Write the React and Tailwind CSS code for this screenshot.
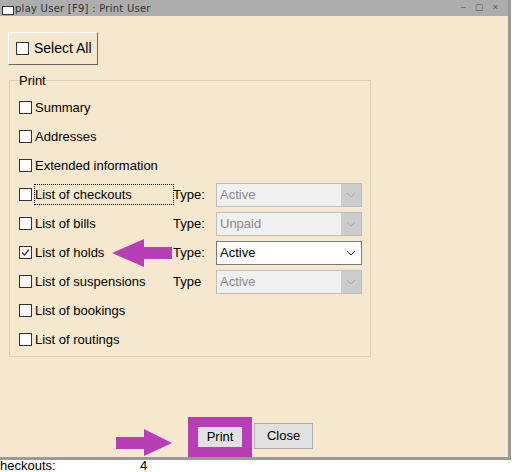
const rows = [
  { label: "Summary" },
  { label: "Addresses" },
  { label: "Extended information" },
  { label: "List of checkouts", type: "Type:", value: "Active", focus: true },
  { label: "List of bills", type: "Type:", value: "Unpaid" },
  { label: "List of holds", type: "Type:", value: "Active", checked: true, enabled: true },
  { label: "List of suspensions", type: "Type", value: "Active" },
  { label: "List of bookings" },
  { label: "List of routings" },
];

function Check({ checked }) {
  return (
    <span className="w-[13px] h-[13px] border border-[#333] bg-white flex items-center justify-center shrink-0">
      {checked && (
        <svg width="11" height="11" viewBox="0 0 11 11">
          <path d="M2 5.5 L4.5 8 L9 2.5" fill="none" stroke="#333" strokeWidth="1.2" />
        </svg>
      )}
    </span>
  );
}

function Chevron({ color }) {
  return (
    <svg width="10" height="6" viewBox="0 0 10 6">
      <path d="M1 1 L5 5 L9 1" fill="none" stroke={color} strokeWidth="1" />
    </svg>
  );
}

export default function App() {
  return (
    <div
      className="relative w-[516px] h-[472px] bg-white overflow-hidden text-[13px] text-black"
      style={{ fontFamily: '"Liberation Sans", Arial, sans-serif' }}
    >
      <div className="w-[511px] h-[460px] border-r-[3px] border-b-[3px] border-[#9a9a9a] bg-[#f6e7cf] flex flex-col">
        <div className="h-[16px] bg-[#adadad] flex items-center relative shrink-0">
          <span className="absolute left-[2px] top-[6px] w-[12px] h-[9px] border border-[#333] bg-white" />
          <span className="ml-[15px] text-[10px] text-[#333] tracking-wide" style={{ fontFamily: '"DejaVu Sans", sans-serif' }}>play User [F9] : Print User</span>
          <span className="ml-auto mr-[10px] flex gap-[9px] text-[9px] text-[#555]">
            <span>–</span><span>▢</span><span>×</span>
          </span>
        </div>
        <div className="pl-[8px] pt-[16px]">
          <div className="w-[90px] h-[33px] border border-[#fff] border-r-[#666] border-b-[#666] flex items-center gap-[5px] pl-[7px] text-[14px]">
            <Check /> Select All
          </div>
        </div>
        <div className="ml-[9px] mt-[15px] w-[362px] h-[277px] border border-[#ddd0bb] pl-[9px] relative">
          <div className="-mt-[8px] mb-[5px] h-[15px] leading-[15px]">Print</div>
          <div className="flex flex-col">
            {rows.map((r) => (
              <div key={r.label} className="h-[29px] flex items-center">
                <Check checked={r.checked} />
                <span className={"ml-[3px] w-[138px] " + (r.focus ? "outline-1 outline-dotted outline-black" : "")}>{r.label}</span>
                {r.type && (
                  <>
                    <span className="w-[43px]">{r.type}</span>
                    <div className={"w-[146px] h-[24px] border flex items-center justify-between " + (r.enabled ? "border-[#7a7a7a] bg-white" : "border-[#bdbdbd] bg-[#cccccc]")}>
                      <span className={"h-full flex items-center pl-[3px] w-[124px] " + (r.enabled ? "bg-white text-black" : "bg-[#f0f0f0] text-[#888]")}>{r.value}</span>
                      <span className="pr-[5px]"><Chevron color={r.enabled ? "#333" : "#aaa"} /></span>
                    </div>
                  </>
                )}
              </div>
            ))}
          </div>
        </div>
        <div className="flex items-end mt-auto ml-[188px] gap-[2px]">
          <div className="bg-[#b83eb8] p-[10px]">
            <div className="w-[44px] h-[20px] bg-[#e1e1e1] flex items-center justify-center">Print</div>
          </div>
          <div className="mb-[8px] w-[59px] h-[26px] bg-[#e1e1e1] border border-[#adadad] flex items-center justify-center">Close</div>
        </div>
      </div>
      <div className="flex text-[13px] leading-[12px]">
        <span className="w-[140px]">heckouts:</span><span>4</span>
      </div>
      <svg className="absolute left-[112px] top-[237px]" width="62" height="32" viewBox="0 0 62 32">
        <polygon points="0,16 32,2 32,10 60,10 60,22 32,22 32,30" fill="#b83eb8" />
      </svg>
      <svg className="absolute left-[116px] top-[429px]" width="58" height="28" viewBox="0 0 58 28">
        <polygon points="0,8 28,8 28,0 56,14 28,27 28,20 0,20" fill="#b83eb8" />
      </svg>
    </div>
  );
}
